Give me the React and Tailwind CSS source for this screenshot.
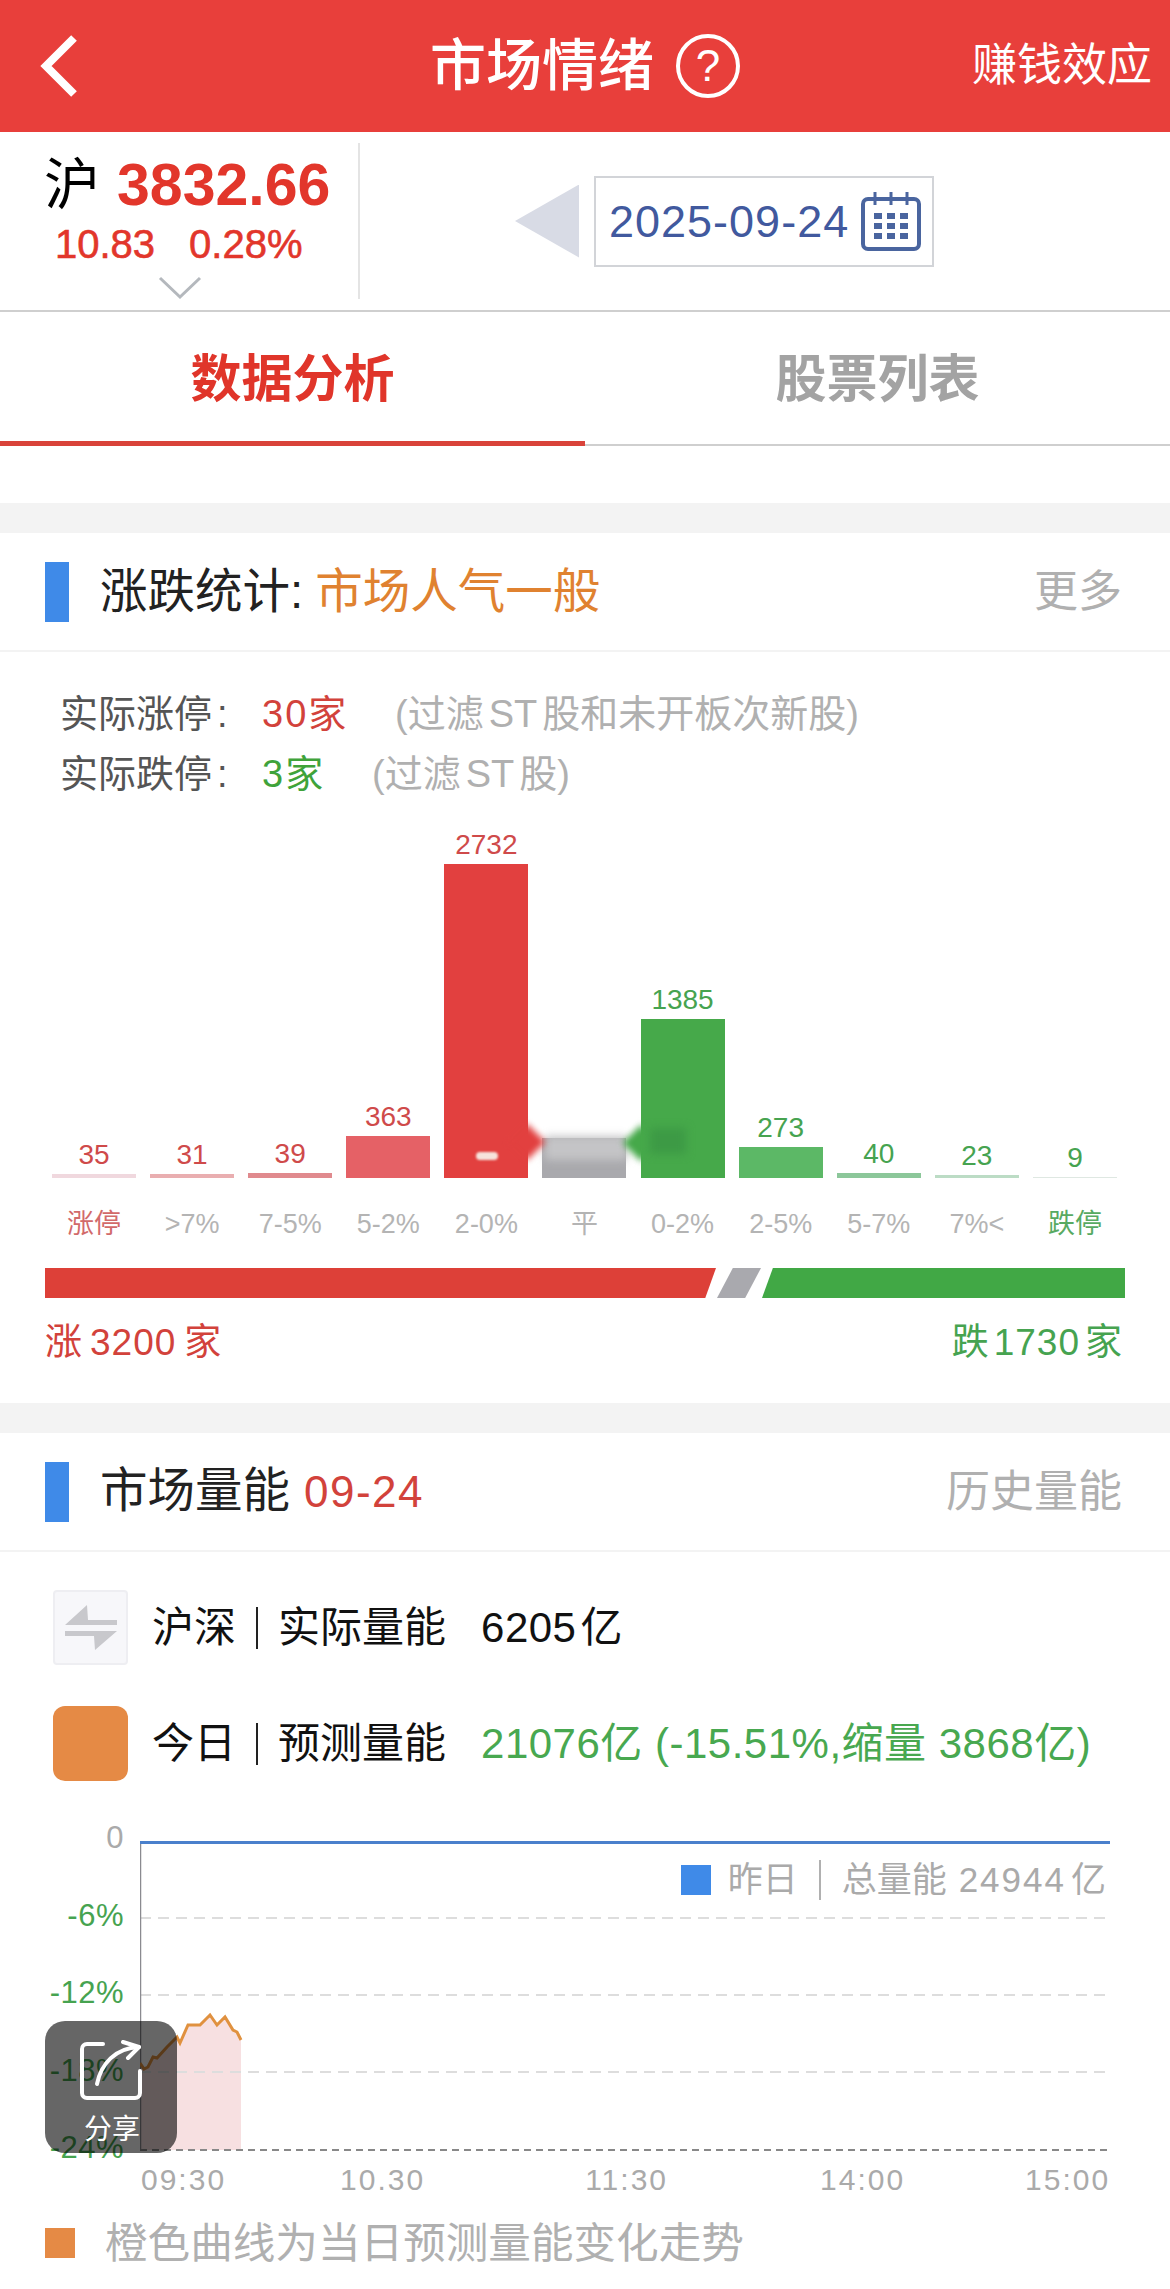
import React from 'react';

const bars = [
  { value: '35', label: '涨停', bar: 'h-[4px] bg-[#f0d8de]', text: 'text-[#cf4a4a]', labelColor: 'text-[#d26a6a]' },
  { value: '31', label: '>7%', bar: 'h-[4px] bg-[#e9aeb0]', text: 'text-[#cf4a4a]', labelColor: 'text-[#b4b4b4]' },
  { value: '39', label: '7-5%', bar: 'h-[5px] bg-[#e08a8e]', text: 'text-[#cf4a4a]', labelColor: 'text-[#b4b4b4]' },
  { value: '363', label: '5-2%', bar: 'h-[42px] bg-[#e56166]', text: 'text-[#cf4a4a]', labelColor: 'text-[#b4b4b4]' },
  { value: '2732', label: '2-0%', bar: 'h-[314px] bg-[#e2403f]', text: 'text-[#cf4a4a]', labelColor: 'text-[#b4b4b4]' },
  { value: '', label: '平', bar: 'h-[40px] bg-[#a9a9ad]', text: 'text-[#999999]', labelColor: 'text-[#b4b4b4]' },
  { value: '1385', label: '0-2%', bar: 'h-[159px] bg-[#46a94a]', text: 'text-[#46a350]', labelColor: 'text-[#b4b4b4]' },
  { value: '273', label: '2-5%', bar: 'h-[31px] bg-[#5cb866]', text: 'text-[#46a350]', labelColor: 'text-[#b4b4b4]' },
  { value: '40', label: '5-7%', bar: 'h-[5px] bg-[#8cc79a]', text: 'text-[#46a350]', labelColor: 'text-[#b4b4b4]' },
  { value: '23', label: '7%<', bar: 'h-[3px] bg-[#bcdcc5]', text: 'text-[#46a350]', labelColor: 'text-[#b4b4b4]' },
  { value: '9', label: '跌停', bar: 'h-[1px] bg-[#dfe8e2]', text: 'text-[#46a350]', labelColor: 'text-[#58aa62]' },
];

const yLabels = [
  { text: '0', color: 'text-[#aaaaaa]' },
  { text: '-6%', color: 'text-[#46a350]' },
  { text: '-12%', color: 'text-[#46a350]' },
  { text: '-18%', color: 'text-[#46a350]' },
  { text: '-24%', color: 'text-[#46a350]' },
];

const times = [
  { text: '09:30', cls: 'ml-[141px]' },
  { text: '10.30', cls: 'ml-[114px]' },
  { text: '11:30', cls: 'ml-[160px]' },
  { text: '14:00', cls: 'ml-[152px]' },
  { text: '15:00', cls: 'ml-[120px]' },
];

const curve = '0,222 4,228 8,226 13,216 17,217 27,206 37,196 40,202 48,184 60,184 70,174 77,184 85,176 93,189 97,191 101,199';

function SectionHeader({ children, right }) {
  return (
    <div className="box-border flex h-[119px] items-center border-b-2 border-[#f3f3f3] pl-[45px] pr-[48px]">
      <div className="h-[60px] w-[24px] bg-[#3f8ae8]" />
      <div className="ml-[31px] flex-1 text-[47.5px] leading-[60px] text-[#222222]">{children}</div>
      <div className="text-[44px] leading-[60px] text-[#b0b0b0]">{right}</div>
    </div>
  );
}

function Separator() {
  return <span className="mx-[20px] inline-block h-[42px] w-[2px] bg-[#222222]" />;
}

export default function App() {
  return (
    <div className="relative h-[2289px] w-[1170px] overflow-hidden bg-white [font-family:'Liberation_Sans','Noto_Sans_CJK_SC',sans-serif]">
      {/* 顶部标题 */}
      <div className="grid h-[132px] grid-cols-[1fr_auto_1fr] items-center bg-[#e83f3b] text-white">
        <svg className="ml-[38px]" width="44" height="64" viewBox="0 0 44 64" fill="none">
          <polyline points="36,4 8,32 36,60" stroke="white" strokeWidth="8" />
        </svg>
        <div className="flex items-center">
          <span className="text-[56px] font-medium leading-[70px]">市场情绪</span>
          <span className="ml-[22px] flex h-[64px] w-[64px] items-center justify-center rounded-full border-[4px] border-white text-[44px] leading-none">?</span>
        </div>
        <div className="pr-[18px] text-right text-[45px] leading-[60px]">赚钱效应</div>
      </div>

      {/* 指数和日期 */}
      <div className="box-border flex h-[180px] items-center border-b-2 border-[#cfcfcf]">
        <div className="flex h-[156px] w-[360px] flex-col border-r-2 border-[#e4e4e4] pt-[7px]">
          <div className="flex h-[70px] items-center pl-[44px]">
            <span className="text-[56px] leading-[70px] text-black">沪</span>
            <span className="ml-[17px] text-[59px] font-bold leading-[70px] text-[#e2362b]">3832.66</span>
          </div>
          <div className="mt-[2px] flex h-[44px] items-center pl-[55px] text-[40px] leading-[44px] text-[#e2362b] [-webkit-text-stroke:0.6px_#e2362b]">
            <span>10.83</span>
            <span className="ml-[34px]">0.28%</span>
          </div>
          <svg className="ml-[158px] mt-[10px] shrink-0" width="44" height="24" viewBox="0 0 44 24" fill="none">
            <polyline points="2,2 22,21 42,2" stroke="#b4b8bd" strokeWidth="3" />
          </svg>
        </div>
        <div className="ml-[155px] h-[73px] w-[64px] bg-[#d8dbe5] [clip-path:polygon(100%_0,100%_100%,0_50%)]" />
        <div className="ml-[15px] box-border flex h-[91px] w-[340px] items-center border-2 border-[#d2d4d8] pl-[13px]">
          <span className="pt-[2px] text-[45px] leading-[50px] tracking-[1px] text-[#41599e]">2025-09-24</span>
          <svg className="ml-[12px] shrink-0" width="60" height="60" viewBox="0 0 60 60" fill="none">
            <rect x="2" y="8" width="56" height="50" rx="5" stroke="#4a659f" strokeWidth="4" />
            <line x1="14" y1="1" x2="14" y2="14" stroke="#4a659f" strokeWidth="3" />
            <line x1="30" y1="1" x2="30" y2="14" stroke="#4a659f" strokeWidth="3" />
            <line x1="46" y1="1" x2="46" y2="14" stroke="#4a659f" strokeWidth="3" />
            <g fill="#4a659f">
              <rect x="13" y="22" width="8" height="6" /><rect x="26" y="22" width="8" height="6" /><rect x="39" y="22" width="8" height="6" />
              <rect x="13" y="32" width="8" height="6" /><rect x="26" y="32" width="8" height="6" /><rect x="39" y="32" width="8" height="6" />
              <rect x="13" y="42" width="8" height="6" /><rect x="26" y="42" width="8" height="6" /><rect x="39" y="42" width="8" height="6" />
            </g>
          </svg>
        </div>
      </div>

      {/* 标签页 */}
      <div className="flex h-[134px]">
        <div className="box-border flex w-[585px] items-center justify-center border-b-[5px] border-[#d9433a] pt-[8px] text-[51px] font-bold text-[#e0352a]">
          数据分析
        </div>
        <div className="box-border flex flex-1 items-center justify-center border-b-2 border-[#cfcfcf] pt-[5px] text-[51px] font-bold text-[#a3a3a3]">
          股票列表
        </div>
      </div>

      <div className="h-[57px]" />
      <div className="h-[30px] bg-[#f3f3f3]" />

      {/* 涨跌统计 */}
      <SectionHeader right="更多">
        涨跌统计:<span className="ml-[12px] text-[#e08230]">市场人气一般</span>
      </SectionHeader>

      <div className="pt-[32px]">
        <div className="flex h-[60px] items-center pl-[60px] text-[38px] leading-[60px]">
          <span className="w-[202px] text-[#555555]">实际涨停<span className="ml-[5px]">:</span></span>
          <span className="w-[133px] tracking-[2px] text-[#d2423b]">30家</span>
          <span className="text-[#b0b0b0]">(过滤<span className="mx-[5px]">ST</span>股和未开板次新股)</span>
        </div>
        <div className="flex h-[60px] items-center pl-[60px] text-[38px] leading-[60px]">
          <span className="w-[202px] text-[#555555]">实际跌停<span className="ml-[5px]">:</span></span>
          <span className="w-[110px] tracking-[2px] text-[#3fa33a]">3家</span>
          <span className="text-[#b0b0b0]">(过滤<span className="mx-[5px]">ST</span>股)</span>
        </div>

        {/* 柱状图 */}
        <div className="relative flex h-[374px] items-end gap-[14.1px] pl-[52px]">
          {bars.map((b) => (
            <div key={b.label} className="flex w-[84px] flex-col items-center">
              <div className={`mb-[5px] text-[28px] leading-[28px] ${b.text}`}>{b.value}</div>
              <div className={`w-full ${b.bar}`} />
            </div>
          ))}
          {/* 模糊水印 */}
          <div className="absolute bottom-[18px] left-[545px] h-[24px] w-[82px] bg-[#c4c4c6] blur-[4px]" />
          <div className="absolute bottom-[23px] left-[514px] h-[26px] w-[26px] rotate-45 bg-[#e2403f] blur-[3px]" />
          <div className="absolute bottom-[22px] left-[628px] h-[26px] w-[26px] rotate-45 bg-[#46a94a] blur-[3px]" />
          <div className="absolute bottom-[24px] left-[650px] h-[26px] w-[36px] bg-[#3d9a45] blur-[4px]" />
          <div className="absolute bottom-[18px] left-[476px] h-[8px] w-[22px] rounded-full bg-[#f6e3dc] blur-[1px]" />
        </div>

        <div className="mt-[26px] flex gap-[14.1px] pl-[52px]">
          {bars.map((b) => (
            <div key={b.label} className={`w-[84px] text-center text-[27px] leading-[40px] ${b.labelColor}`}>
              {b.label}
            </div>
          ))}
        </div>

        <div className="ml-[45px] mt-[24px] flex h-[30px] w-[1080px]">
          <div className="h-full w-[671px] bg-[#dd4038] [clip-path:polygon(0_0,100%_0,98.4%_100%,0_100%)]" />
          <div className="ml-[1px] h-full w-[44px] bg-[#a9a9ae] [clip-path:polygon(36%_0,100%_0,64%_100%,0_100%)]" />
          <div className="ml-[1px] h-full flex-1 bg-[#41a845] [clip-path:polygon(3%_0,100%_0,100%_100%,0_100%)]" />
        </div>

        <div className="mt-[25px] flex justify-between pl-[45px] pr-[48px] text-[37px] leading-[40px]">
          <span className="text-[#d2423b]">涨<span className="mx-[8px] tracking-[1px]">3200</span>家</span>
          <span className="text-[#46a350]">跌<span className="ml-[5px] mr-[5px] tracking-[1px]">1730</span>家</span>
        </div>
      </div>

      <div className="mt-[40px] h-[30px] bg-[#f3f3f3]" />

      {/* 市场量能 */}
      <SectionHeader right="历史量能">
        市场量能<span className="ml-[14px] text-[44px] tracking-[1.5px] text-[#d2423b]">09-24</span>
      </SectionHeader>

      <div className="pt-[38px]">
        <div className="flex h-[75px] items-center pl-[53px] text-[42px] leading-[50px] text-[#111111]">
          <div className="box-border flex h-[75px] w-[75px] items-center justify-center rounded-[4px] border-2 border-[#eeeef2] bg-[#f7f7fa]">
            <svg width="56" height="46" viewBox="0 0 56 46" fill="#c8c8cc">
              <polygon points="2,20 24,0 25,15 54,15 54,20" />
              <polygon points="54,26 32,45 31,31 2,31 2,26" />
            </svg>
          </div>
          <span className="ml-[24px]">沪深</span>
          <Separator />
          <span>实际量能</span>
          <span className="ml-[35px] tracking-[0.5px]">6205<span className="ml-[4px]">亿</span></span>
        </div>
        <div className="mt-[41px] flex h-[75px] items-center pl-[53px] text-[42px] leading-[50px] text-[#111111]">
          <div className="h-[75px] w-[75px] rounded-[12px] bg-[#e58a45]" />
          <span className="ml-[24px]">今日</span>
          <Separator />
          <span>预测量能</span>
          <span className="ml-[35px] tracking-[0.5px] text-[#48a850]">21076亿 (-15.51%,缩量 3868亿)</span>
        </div>

        {/* 量能走势 */}
        <div className="mt-[37px] flex">
          <div className="flex h-[350px] w-[124px] flex-col justify-between text-right text-[31px] leading-[40px] tracking-[0.5px]">
            {yLabels.map((y) => (
              <div key={y.text} className={y.color}>{y.text}</div>
            ))}
          </div>
          <div className="relative ml-[16px] pt-[23px]">
            <svg width="970" height="311" viewBox="0 0 970 311" fill="none">
              <polygon points={`${curve} 101,309 0,309`} fill="#f7e0e1" />
              <line x1="0" y1="77" x2="970" y2="77" stroke="#dddddd" strokeWidth="2" strokeDasharray="11 7" />
              <line x1="0" y1="154" x2="970" y2="154" stroke="#dddddd" strokeWidth="2" strokeDasharray="11 7" />
              <line x1="0" y1="231" x2="970" y2="231" stroke="#dddddd" strokeWidth="2" strokeDasharray="11 7" />
              <line x1="0" y1="309" x2="970" y2="309" stroke="#888888" strokeWidth="2" strokeDasharray="7 5" />
              <line x1="0.5" y1="0" x2="0.5" y2="309" stroke="#8a8a90" strokeWidth="1.5" />
              <line x1="0" y1="1.5" x2="970" y2="1.5" stroke="#4a80cc" strokeWidth="3" />
              <polyline points={curve} stroke="#e0913f" strokeWidth="3" />
            </svg>
            <div className="absolute right-[4px] top-[40px] flex items-center text-[35px] leading-[44px] text-[#aaaaaa]">
              <span className="h-[30px] w-[30px] bg-[#3f8ae8]" />
              <span className="ml-[17px]">昨日</span>
              <span className="mx-[21px] inline-block h-[40px] w-[2px] bg-[#b0b0b0]" />
              <span>总量能<span className="ml-[12px] mr-[5px] tracking-[2px]">24944</span>亿</span>
            </div>
          </div>
        </div>
        <div className="-mt-[8px] flex text-[30px] leading-[40px] tracking-[2px] text-[#aaaaaa]">
          {times.map((t) => (
            <span key={t.text} className={t.cls}>{t.text}</span>
          ))}
        </div>

        <div className="mt-[21px] flex h-[44px] items-center pl-[45px]">
          <span className="h-[30px] w-[30px] bg-[#e58a45]" />
          <span className="ml-[30px] text-[42.6px] leading-[44px] text-[#b0b0b0]">橙色曲线为当日预测量能变化走势</span>
        </div>
      </div>

      {/* 分享浮层 */}
      <div className="absolute left-[45px] top-[2021px] flex h-[132px] w-[132px] flex-col items-center rounded-[20px] bg-black/60 pt-[19px] text-white">
        <svg className="shrink-0" width="64" height="62" viewBox="0 0 64 62" fill="none" stroke="white" strokeWidth="4" strokeLinecap="round" strokeLinejoin="round">
          <path d="M24 4H8a5 5 0 0 0-5 5v44a5 5 0 0 0 5 5h48a5 5 0 0 0 5-5V31" />
          <path d="M18 44C22 24 36 8 60 7" />
          <path d="M44 2L60 7L49 18" />
        </svg>
        <span className="mt-[8px] pl-[2px] text-[28px] leading-[40px]">分享</span>
      </div>
    </div>
  );
}
